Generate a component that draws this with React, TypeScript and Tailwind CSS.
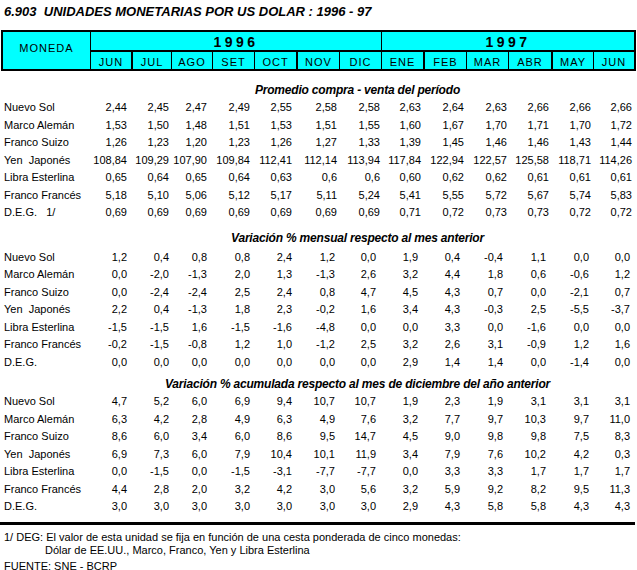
const FONT = { fontFamily: '"Liberation Sans", Arial, sans-serif' };

const MONTHS_96 = ["JUN", "JUL", "AGO", "SET", "OCT", "NOV", "DIC"];
const MONTHS_97 = ["ENE", "FEB", "MAR", "ABR", "MAY", "JUN"];

type Row = [string, string[]];

const promedio: Row[] = [
  ["Nuevo Sol", ["2,44", "2,45", "2,47", "2,49", "2,55", "2,58", "2,58", "2,63", "2,64", "2,63", "2,66", "2,66", "2,66"]],
  ["Marco Alemán", ["1,53", "1,50", "1,48", "1,51", "1,53", "1,51", "1,55", "1,60", "1,67", "1,70", "1,71", "1,70", "1,72"]],
  ["Franco Suizo", ["1,26", "1,23", "1,20", "1,23", "1,26", "1,27", "1,33", "1,39", "1,45", "1,46", "1,46", "1,43", "1,44"]],
  ["Yen  Japonés", ["108,84", "109,29", "107,90", "109,84", "112,41", "112,14", "113,94", "117,84", "122,94", "122,57", "125,58", "118,71", "114,26"]],
  ["Libra Esterlina", ["0,65", "0,64", "0,65", "0,64", "0,63", "0,6", "0,6", "0,60", "0,62", "0,62", "0,61", "0,61", "0,61"]],
  ["Franco Francés", ["5,18", "5,10", "5,06", "5,12", "5,17", "5,11", "5,24", "5,41", "5,55", "5,72", "5,67", "5,74", "5,83"]],
  ["D.E.G.   1/", ["0,69", "0,69", "0,69", "0,69", "0,69", "0,69", "0,69", "0,71", "0,72", "0,73", "0,73", "0,72", "0,72"]],
];

const mensual: Row[] = [
  ["Nuevo Sol", ["1,2", "0,4", "0,8", "0,8", "2,4", "1,2", "0,0", "1,9", "0,4", "-0,4", "1,1", "0,0", "0,0"]],
  ["Marco Alemán", ["0,0", "-2,0", "-1,3", "2,0", "1,3", "-1,3", "2,6", "3,2", "4,4", "1,8", "0,6", "-0,6", "1,2"]],
  ["Franco Suizo", ["0,0", "-2,4", "-2,4", "2,5", "2,4", "0,8", "4,7", "4,5", "4,3", "0,7", "0,0", "-2,1", "0,7"]],
  ["Yen  Japonés", ["2,2", "0,4", "-1,3", "1,8", "2,3", "-0,2", "1,6", "3,4", "4,3", "-0,3", "2,5", "-5,5", "-3,7"]],
  ["Libra Esterlina", ["-1,5", "-1,5", "1,6", "-1,5", "-1,6", "-4,8", "0,0", "0,0", "3,3", "0,0", "-1,6", "0,0", "0,0"]],
  ["Franco Francés", ["-0,2", "-1,5", "-0,8", "1,2", "1,0", "-1,2", "2,5", "3,2", "2,6", "3,1", "-0,9", "1,2", "1,6"]],
  ["D.E.G.", ["0,0", "0,0", "0,0", "0,0", "0,0", "0,0", "0,0", "2,9", "1,4", "1,4", "0,0", "-1,4", "0,0"]],
];

const acumulada: Row[] = [
  ["Nuevo Sol", ["4,7", "5,2", "6,0", "6,9", "9,4", "10,7", "10,7", "1,9", "2,3", "1,9", "3,1", "3,1", "3,1"]],
  ["Marco Alemán", ["6,3", "4,2", "2,8", "4,9", "6,3", "4,9", "7,6", "3,2", "7,7", "9,7", "10,3", "9,7", "11,0"]],
  ["Franco Suizo", ["8,6", "6,0", "3,4", "6,0", "8,6", "9,5", "14,7", "4,5", "9,0", "9,8", "9,8", "7,5", "8,3"]],
  ["Yen  Japonés", ["6,9", "7,3", "6,0", "7,9", "10,4", "10,1", "11,9", "3,4", "7,9", "7,6", "10,2", "4,2", "0,3"]],
  ["Libra Esterlina", ["0,0", "-1,5", "0,0", "-1,5", "-3,1", "-7,7", "-7,7", "0,0", "3,3", "3,3", "1,7", "1,7", "1,7"]],
  ["Franco Francés", ["4,4", "2,8", "2,0", "3,2", "4,2", "3,0", "5,6", "3,2", "5,9", "9,2", "8,2", "9,5", "11,3"]],
  ["D.E.G.", ["3,0", "3,0", "3,0", "3,0", "3,0", "3,0", "3,0", "2,9", "4,3", "5,8", "5,8", "4,3", "4,3"]],
];

// grid templates: section 1 sits a few px further right in the later columns
const COLS_A = "grid grid-cols-[85px_42px_42px_38px_43px_42px_45px_43px_41px_43px_43px_42px_42px_41px]";
const COLS_B = "grid grid-cols-[85px_42px_42px_38px_43px_42px_43px_41px_42px_42px_43px_43px_43px_41px]";

function Section({ title, rows, cols, titleClass }: { title: string; rows: Row[]; cols: string; titleClass: string }) {
  return (
    <div>
      <div className={`${titleClass} pl-[78px] text-center text-[12px] leading-[14px] font-bold italic tracking-[-0.2px]`}>
        {title}
      </div>
      {rows.map(([label, values]) => (
        <div key={label} className={`${cols} h-[17.5px] items-center text-[11px] leading-[13px]`}>
          <span className="whitespace-pre pl-[4px]">{label}</span>
          {values.map((v, i) => (
            <span key={i} className="text-right">
              {v}
            </span>
          ))}
        </div>
      ))}
    </div>
  );
}

function Header() {
  const thick = [0, 4, 7, 10];
  return (
    <div className="ml-[1px] w-[635px] border-t-2 border-l-2 border-black bg-[#00ffff] text-[11px]">
      <div className="grid grid-cols-[88px_42px_39px_41px_42px_43px_42px_42px_43px_42px_42px_44px_41px_42px] grid-rows-[18px_2px_17px_2px]">
        <div className="row-span-4 flex justify-center border-r border-b-2 border-black pt-[8px] tracking-[1px]">
          MONEDA
        </div>
        <div className="col-span-7 flex items-end justify-center border-r border-black text-[14px] leading-[16px] font-bold tracking-[3.5px]">
          1996
        </div>
        <div className="col-span-6 flex items-end justify-center border-r-2 border-black text-[14px] leading-[16px] font-bold tracking-[3.5px]">
          1997
        </div>
        <div className="col-span-13 bg-black" />
        {[...MONTHS_96, ...MONTHS_97].map((m, i) => (
          <div
            key={i}
            className={`${thick.includes(i) || i === 12 ? "border-r-2" : "border-r"} flex items-end justify-center border-black pb-[0px] leading-[13px] tracking-[1px]`}
          >
            {m}
          </div>
        ))}
        <div className="col-span-13 bg-black" />
      </div>
    </div>
  );
}

export default function App() {
  return (
    <div className="h-[570px] w-[637px] bg-white text-black" style={FONT}>
      <div className="h-[30px] pt-[4px] pl-[4px] text-[13px] leading-[16px] font-bold italic whitespace-pre">
        {"6.903  UNIDADES MONETARIAS POR US DOLAR : 1996 - 97"}
      </div>
      <Header />
      <Section title="Promedio compra - venta del período" rows={promedio} cols={COLS_A} titleClass="h-[28px] pt-[12px]" />
      <Section
        title="Variación % mensual respecto al mes anterior"
        rows={mensual}
        cols={COLS_B}
        titleClass="h-[27px] pt-[9px]"
      />
      <Section
        title="Variación % acumulada respecto al mes de diciembre del año anterior"
        rows={acumulada}
        cols={COLS_B}
        titleClass="h-[22px] pt-[6px]"
      />
      <div className="mt-[6px] h-[3px] w-[635px] bg-black" />
      <div className="mt-[6px] pl-[4px] text-[11px] leading-[13px]">
        <p>1/ DEG: El valor de esta unidad se fija en función de una cesta ponderada de cinco monedas:</p>
        <p className="pl-[41px]">Dólar de EE.UU., Marco, Franco, Yen y Libra Esterlina</p>
        <p className="mt-[3px]">FUENTE: SNE - BCRP</p>
      </div>
    </div>
  );
}
